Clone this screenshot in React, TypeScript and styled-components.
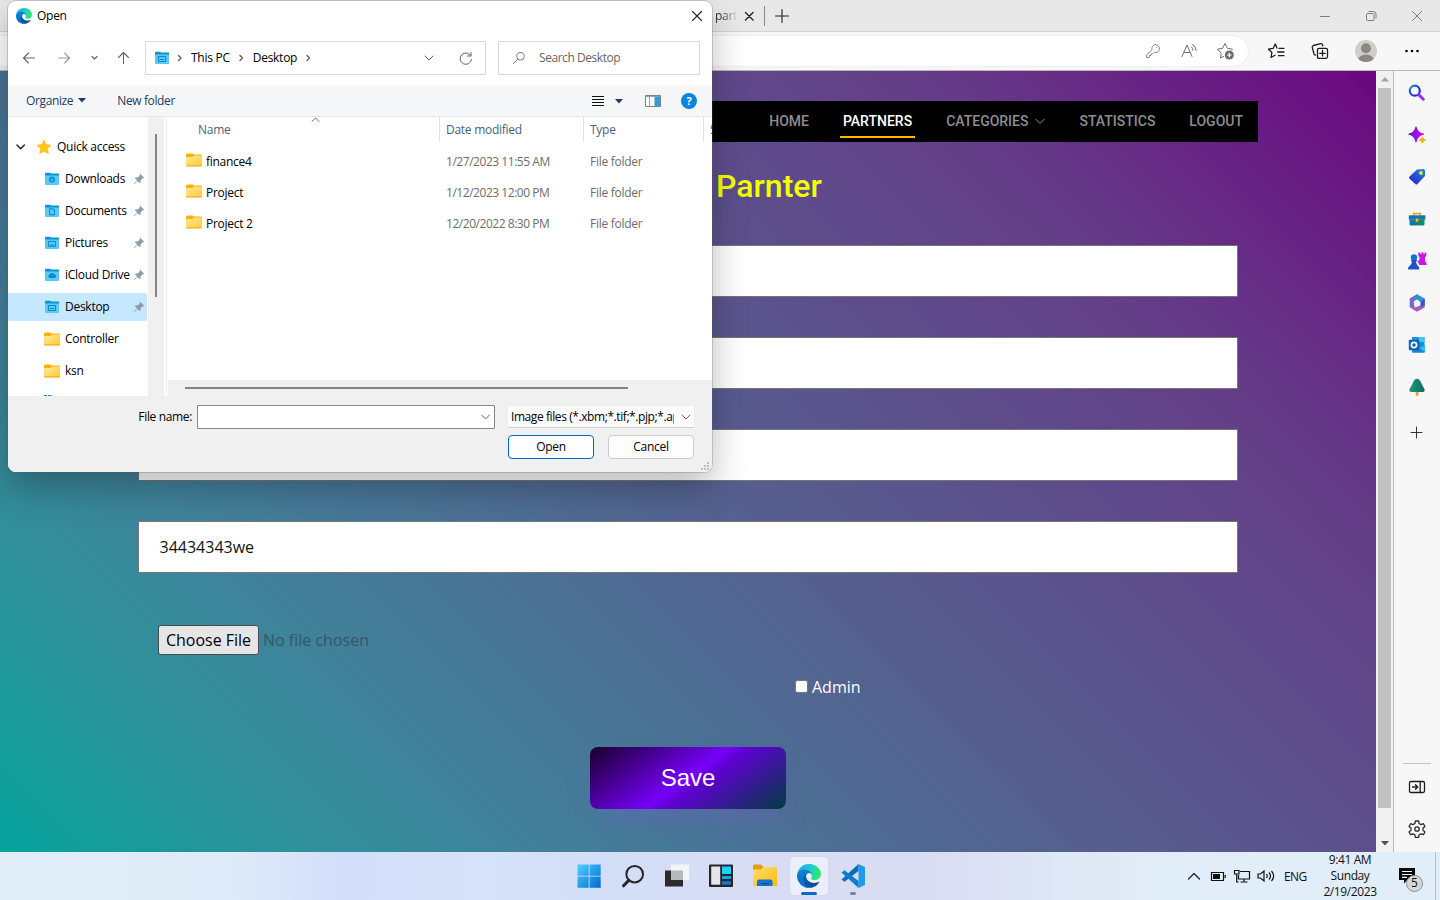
import React from "react";
import styled, { createGlobalStyle, css } from "styled-components";

const Global = createGlobalStyle`
  * { box-sizing: border-box; }
  body { margin: 0; overflow: hidden; font-family: "Open Sans", "Noto Sans", sans-serif; }
`;

const Screen = styled.div`
  position: relative;
  width: 1440px;
  height: 900px;
  overflow: hidden;
  display: flex;
  flex-direction: column;
  background: #f7f7f7;
`;

/* ---------- browser chrome ---------- */
const TabStrip = styled.div`
  height: 32px;
  flex: none;
  display: flex;
  align-items: center;
  background: #e8e8e8;
  border-bottom: 1px solid #d5d5d5;
  padding-left: 715px;
  svg { flex: none; }
`;
const TabTitle = styled.span`
  width: 21px;
  overflow: hidden;
  white-space: nowrap;
  font-size: 12px;
  line-height: 18px;
  letter-spacing: -0.25px;
  background: linear-gradient(90deg, #333 35%, #d0d0d0 100%);
  background-clip: text;
  color: transparent;
`;
const TabClose = styled.div`
  width: 26px;
  display: flex;
  justify-content: center;
`;
const TabDivider = styled.div`
  width: 1px;
  height: 20px;
  background: #8a8a8a;
  margin: 0 9px 0 2px;
`;
const WindowControls = styled.div`
  margin-left: auto;
  display: flex;
  svg { margin-right: 30px; }
  svg:last-child { margin-right: 15px; }
`;
const Toolbar = styled.div`
  height: 39px;
  flex: none;
  display: flex;
  align-items: center;
  background: #f7f7f7;
  border-bottom: 1px solid #b9b9b9;
  width: 1440px;
`;
const AddressPill = styled.div`
  width: 1248px;
  height: 30px;
  background: #fff;
  border-radius: 0 15px 15px 0;
  box-shadow: 0 0 2px #ddd;
  display: flex;
  align-items: center;
  justify-content: flex-end;
  gap: 18px;
  padding-right: 14px;
`;
const ToolbarActions = styled.div`
  display: flex;
  align-items: center;
  padding-left: 19px;
  svg + svg { margin-left: 26px; }
  svg:last-child { margin-left: 27px; }
`;
const Middle = styled.div`
  height: 781px;
  flex: none;
  display: flex;
`;

/* ---------- web page ---------- */
const Page = styled.main`
  width: 1376px;
  height: 781px;
  overflow: hidden;
  background: linear-gradient(45deg, #04a39b 0%, #2a949a 12%, #41819a 25%, #55608f 50%, #643e88 78%, #6b0780 100%);
`;
const Nav = styled.nav`
  height: 41px;
  margin: 30px 118px 0;
  padding-right: 15px;
  background: #000;
  display: flex;
  justify-content: flex-end;
  gap: 28px;
`;
const NavItem = styled.a<{ $active?: boolean }>`
  height: 37px;
  display: flex;
  align-items: center;
  gap: 7px;
  padding: 5px 3px 0;
  border-bottom: 2px solid ${(p) => (p.$active ? "#ffb703" : "transparent")};
  color: ${(p) => (p.$active ? "#fff" : "#8e8e8e")};
  font: 500 14px Roboto, sans-serif;
  &:last-child { padding-right: 0; }
`;
const Title = styled.h1`
  margin: 25px 0 0 716px;
  font: 500 32px/38px Roboto, sans-serif;
  color: #f4ff00;
`;
const Form = styled.div`
  width: 1100px;
  margin: 40px 0 0 138px;
  display: flex;
  flex-direction: column;
  gap: 40px;
`;
const Field = styled.div`
  height: 52px;
  flex: none;
  border: 1px solid #767676;
  background: #fff;
  padding: 0 20.5px;
  display: flex;
  align-items: center;
  font-size: 16px;
  color: #111;
`;
const FileRow = styled.div`
  display: flex;
  align-items: center;
  margin: 12px 20px 0;
  gap: 4px;
  color: #36556a;
  font-size: 16px;
  height: 30px;
`;
const ChooseFile = styled.div`
  width: 101px;
  height: 30px;
  border: 1px solid #4b4b4b;
  border-radius: 3px;
  background: #e6e6e6;
  color: #000;
  text-align: center;
  line-height: 28px;
`;
const AdminRow = styled.label`
  display: flex;
  align-items: center;
  gap: 4px;
  height: 24px;
  margin: -20px 0 0 657px;
  font-size: 16px;
  color: #fff;
`;
const CheckBox = styled.span`
  width: 13px;
  height: 13px;
  margin-bottom: 1px;
  border: 1px solid #767676;
  border-radius: 2.5px;
  background: #fff;
`;
const SaveButton = styled.div`
  width: 196px;
  height: 62px;
  margin: 8px auto 0;
  border-radius: 8px;
  background: linear-gradient(144deg, #17002a 0%, #7700fb 50%, #6100d4 56%, #003c40 100%);
  box-shadow: rgba(151, 65, 252, 0.2) 0 15px 30px -5px;
  color: #fff;
  font: 24px/62px "Liberation Sans", sans-serif;
  text-align: center;
`;

const PageScroll = styled.div`
  width: 18px;
  display: flex;
  flex-direction: column;
  align-items: center;
  background: #f1f1f1;
  border-right: 1px solid #b9b9b9;
`;
const PageThumb = styled.div`
  width: 13px;
  height: 720px;
  background: #c1c1c1;
`;
const ScrollArrow = styled.div`
  height: 17px;
  display: flex;
  align-items: center;
  & + ${PageThumb} + & { margin-top: auto; }
`;
const EdgeBar = styled.aside`
  width: 46px;
  display: flex;
  flex-direction: column;
  align-items: center;
  padding-top: 10px;
  gap: 18px;
  background: #f7f7f7;
  svg { flex: none; }
`;
const EdgeBarRule = styled.div`
  width: 28px;
  height: 1px;
  background: #c4c4c4;
  margin: auto 0 -7px;
`;
const EdgeBarFooter = styled.div`
  display: flex;
  flex-direction: column;
  gap: 18px;
  padding-bottom: 11px;
`;

/* ---------- taskbar ---------- */
const Taskbar = styled.footer`
  height: 48px;
  display: flex;
  align-items: center;
  padding-left: 567px;
  background: linear-gradient(90deg, #e1eef8 0, #deebf8 230px, #d3defa 340px, #d6e2f9 480px, #d2dff8 590px, #d9dcf4 760px, #d9ddf3 930px, #dfe9f6 1080px, #e1eef9 1200px);
`;
const TaskSlot = styled.div<{ $active?: boolean; $dot?: string }>`
  position: relative;
  width: 38px;
  height: 38px;
  margin: 0 3px;
  display: flex;
  align-items: center;
  justify-content: center;
  border-radius: 4px;
  ${(p) => p.$active && css`background: #ebeffa; box-shadow: 0 0 1px #b8bfd0;`}
  &::after {
    content: "";
    position: absolute;
    bottom: 0;
    width: ${(p) => (p.$active ? 16 : 6)}px;
    height: 3px;
    border-radius: 2px;
    background: ${(p) => p.$dot || "transparent"};
  }
`;
const Tray = styled.div`
  margin-left: auto;
  display: flex;
  align-items: center;
  gap: 6px;
  font-size: 12px;
  color: #111;
  height: 48px;
`;
const Lang = styled.span`
  margin-left: 3px;
  letter-spacing: -0.55px;
  width: 26px;
`;
const Clock = styled.div`
  width: 60px;
  margin-left: 4px;
  text-align: center;
  line-height: 16px;
  letter-spacing: -0.4px;
`;
const Notices = styled.div`
  position: relative;
  width: 17px;
  height: 16px;
  margin: 0 13px 0 13px;
`;
const Badge = styled.span`
  position: absolute;
  left: 7px;
  top: 7px;
  width: 17px;
  height: 17px;
  border: 1px solid #8b8f93;
  border-radius: 50%;
  background: #d5d8db;
  font-size: 12px;
  line-height: 14px;
  text-align: center;
`;
const ShowDesktop = styled.div`
  width: 5px;
  height: 48px;
  border-left: 1px solid #b3bec8;
`;

/* ---------- file dialog ---------- */
const Dialog = styled.section`
  position: absolute;
  left: 8px;
  top: 1px;
  width: 704px;
  height: 471px;
  border-radius: 8px;
  background: #fff;
  box-shadow: 0 0 0 1px rgba(90, 90, 90, 0.25), 0 16px 36px rgba(0, 0, 0, 0.27);
  font-size: 12px;
  letter-spacing: -0.27px;
  color: #000;
  white-space: nowrap;
`;
const DialogBody = styled.div`
  width: 704px;
  height: 471px;
  overflow: hidden;
  border-radius: 8px;
  display: flex;
  flex-direction: column;
`;
const DialogTitle = styled.header`
  height: 29px;
  flex: none;
  display: flex;
  align-items: center;
  padding: 0 7px 0 8px;
  gap: 5px;
  svg:last-child { margin-left: auto; }
`;
const Locator = styled.div`
  height: 56px;
  flex: none;
  display: flex;
  align-items: center;
  padding-left: 13px;
`;
const NavGlyphs = styled.div`
  width: 124px;
  display: flex;
  align-items: center;
`;
const PathBox = styled.div`
  width: 341px;
  height: 34px;
  border: 1px solid #d9d9d9;
  display: flex;
  align-items: center;
  padding: 0 12px 0 8px;
  svg { flex: none; }
`;
const Crumb = styled.span`
  margin: -1px 8px 0 8px;
`;
const PathEnd = styled.div`
  margin-left: auto;
  display: flex;
  align-items: center;
  gap: 24px;
`;
const SearchBox = styled.div`
  width: 202px;
  height: 34px;
  margin-left: 12px;
  border: 1px solid #d9d9d9;
  display: flex;
  align-items: center;
  gap: 13px;
  padding: 0 0 1px 13px;
  letter-spacing: -0.45px;
  color: #666;
`;
const CommandBar = styled.div`
  height: 31px;
  flex: none;
  display: flex;
  align-items: center;
  background: #f5f6f7;
  border-bottom: 1px solid #e4e6e9;
  padding: 0 15px 0 18px;
  color: #1f3b62;
`;
const Command = styled.span`
  display: flex;
  align-items: center;
  gap: 5px;
  margin: -1px 31px 0 0;
  letter-spacing: -0.37px;
`;
const CommandIcons = styled.div`
  margin-left: auto;
  display: flex;
  align-items: center;
`;
const SortCaret = styled.svg`
  margin: 0 22px 0 11px;
`;
const Help = styled.span`
  width: 16px;
  height: 16px;
  margin-left: 20px;
  border-radius: 50%;
  background: #0a84dc;
  color: #fff;
  font-weight: 700;
  font-size: 11px;
  line-height: 16px;
  text-align: center;
`;
const Panes = styled.div`
  height: 279px;
  flex: none;
  display: flex;
`;
const Tree = styled.div`
  width: 140px;
  height: 279px;
  overflow: hidden;
  padding-top: 16px;
`;
const TreeRow = styled.div<{ $root?: boolean; $selected?: boolean }>`
  width: 139px;
  height: 28px;
  margin-bottom: 4px;
  border-radius: 2px;
  display: flex;
  align-items: center;
  gap: 5px;
  padding: 0 2px 0 ${(p) => (p.$root ? 8 : 36)}px;
  background: ${(p) => (p.$selected ? "#c5e7ff" : "transparent")};
  svg { flex: none; }
`;
const TreeLabel = styled.span`
  width: 63px;
  flex: none;
  margin-top: -2px;
`;
const TreeScroll = styled.div`
  width: 16px;
  background: #f0f0f0;
  padding: 17px 0 0 7px;
`;
const TreeThumb = styled.div`
  width: 2px;
  height: 163px;
  background: #858585;
`;
const Splitter = styled.div`
  width: 4px;
  border-left: 2px solid #fff;
  background: linear-gradient(90deg, #f0f0f0 1px, #fff 1px);
`;
const FileList = styled.div`
  width: 544px;
  display: flex;
  flex-direction: column;
`;
const ColumnHeads = styled.div`
  position: relative;
  height: 29px;
  display: flex;
  color: #4a5f80;
  overflow: hidden;
  > svg { position: absolute; left: 143px; top: 0; }
`;
const ColumnHead = styled.div<{ $w: number; $pad: number }>`
  width: ${(p) => p.$w}px;
  flex: none;
  height: 25px;
  line-height: 26px;
  padding-left: ${(p) => p.$pad}px;
  border-right: 1px solid #e2e2e2;
`;
const FileRowItem = styled.div`
  height: 31px;
  display: flex;
  align-items: center;
  padding-left: 18px;
  color: #6d6d6d;
  svg { margin-bottom: 3px; }
`;
const FileName = styled.span`
  width: 260px;
  display: flex;
  align-items: center;
  gap: 4px;
  color: #000;
`;
const FileDate = styled.span`
  width: 144px;
  letter-spacing: -0.46px;
`;
const HScroll = styled.div`
  height: 16px;
  margin-top: auto;
  background: #f0f0f0;
  padding: 7px 0 0 17px;
`;
const HThumb = styled.div`
  width: 443px;
  height: 2px;
  background: #858585;
`;
const DialogFooter = styled.div`
  flex: 1;
  background: #f0f0f0;
  padding: 9px 18px 0 0;
  display: flex;
  flex-direction: column;
  gap: 6px;
`;
const FooterRow = styled.div<{ $gap: number }>`
  display: flex;
  justify-content: flex-end;
  align-items: center;
  gap: ${(p) => p.$gap}px;
  height: 24px;
`;
const NameLabel = styled.span`
  letter-spacing: -0.35px;
  margin-top: -1px;
`;
const NameInput = styled.div`
  width: 298px;
  height: 24px;
  margin-right: 8px;
  border: 1px solid #858585;
  border-radius: 1px;
  background: #fff;
  display: flex;
  align-items: center;
  justify-content: flex-end;
  padding-right: 4px;
`;
const TypeSelect = styled.div`
  width: 186px;
  height: 22px;
  background: #fbfbfb;
  border-bottom: 1px solid #cfcfcf;
  display: flex;
  align-items: center;
  padding: 0 3px;
  svg { margin-left: auto; flex: none; }
`;
const TypeText = styled.span`
  width: 163px;
  overflow: hidden;
  letter-spacing: -0.42px;
`;
const DialogButton = styled.div<{ $primary?: boolean }>`
  width: 86px;
  height: 24px;
  border: 1px solid ${(p) => (p.$primary ? "#0067c0" : "#cbcbcb")};
  border-radius: 4px;
  background: #fdfdfd;
  line-height: 21px;
  text-align: center;
`;
const Grip = styled.svg`
  position: absolute;
  right: 3px;
  bottom: 2px;
`;

/* ---------- icons ---------- */
const EdgeLogo = ({ size, id }: { size: number; id: string }) => (
  <svg width={size} height={size} viewBox="0 0 256 256">
    <defs>
      <linearGradient id={`${id}a`} x1="0.1" y1="0.6" x2="1" y2="0.6"><stop offset="0" stopColor="#0c59a4" /><stop offset="1" stopColor="#114a8b" /></linearGradient>
      <linearGradient id={`${id}b`} x1="0.8" y1="0.2" x2="0.2" y2="0.9"><stop offset="0" stopColor="#1278c8" /><stop offset="0.4" stopColor="#1080d4" /><stop offset="1" stopColor="#0067d8" /></linearGradient>
      <linearGradient id={`${id}c`} x1="0" y1="0.3" x2="1" y2="0.5"><stop offset="0" stopColor="#1ba6ea" /><stop offset="0.45" stopColor="#1cc4dc" /><stop offset="0.75" stopColor="#22e09c" /><stop offset="1" stopColor="#30ee60" /></linearGradient>
    </defs>
    <g transform="translate(-4.63 -4.92)">
      <path fill={`url(#${id}a)`} d="M235.68 195.46a93.73 93.73 0 0 1-10.54 4.71 101.87 101.87 0 0 1-35.9 6.46c-47.32 0-88.54-32.55-88.54-74.32A31.48 31.48 0 0 1 117.13 105c-42.8 1.8-53.8 46.4-53.8 72.53 0 73.88 68.09 81.37 82.76 81.37 7.91 0 19.84-2.3 27-4.56l1.31-.44a128.34 128.34 0 0 0 66.6-52.8 4 4 0 0 0-5.32-5.64Z" />
      <path fill={`url(#${id}b)`} d="M110.34 246.34A79.2 79.2 0 0 1 87.6 225a80.72 80.72 0 0 1 29.53-120c3.12-1.47 8.45-4.13 15.54-4a32.35 32.35 0 0 1 25.69 13 31.88 31.88 0 0 1 6.36 18.66c0-.21 24.46-79.6-80-79.6-43.9 0-80 41.66-80 78.21a130.15 130.15 0 0 0 12.11 56 128 128 0 0 0 156.38 67.11 75.55 75.55 0 0 1-62.78-8Z" />
      <path fill={`url(#${id}c)`} d="M156.94 153.78c-.81 1.05-3.3 2.5-3.3 5.66 0 2.61 1.7 5.12 4.72 7.23 14.38 10 41.49 8.68 41.56 8.68a59.56 59.56 0 0 0 30.27-8.35 61.38 61.38 0 0 0 30.43-52.88c.26-22.41-8-37.31-11.34-43.91C228.09 28.76 182.35 4.92 132.61 4.92a128 128 0 0 0-128 126.2c.48-36.54 36.8-66.05 80-66.05 3.5 0 23.46.34 42 10.07 16.34 8.58 24.9 18.94 30.85 29.21 6.18 10.67 7.28 24.15 7.28 29.52 0 5.37-2.74 13.33-7.8 19.91Z" />
    </g>
  </svg>
);

type StrokeProps = { w: number; h: number; d: string; c?: string; sw?: number };
const Stroke = ({ w, h, d, c = "#222", sw = 1 }: StrokeProps) => (
  <svg width={w} height={h} viewBox={`0 0 ${w} ${h}`} fill="none" stroke={c} strokeWidth={sw} strokeLinecap="round" strokeLinejoin="round">
    <path d={d} />
  </svg>
);

const YellowFolder = () => (
  <svg width="16" height="14" viewBox="0 0 16 14">
    <defs><linearGradient id="yf" x1="0" y1="0" x2="1" y2="1"><stop offset="0" stopColor="#ffe9a0" /><stop offset="1" stopColor="#ffcb2e" /></linearGradient></defs>
    <path d="M0 2a1.500 1.500 0 0 1 1.500-1.500H6.500L8 1.500h7a1 1 0 0 1 1 1V12H0z" fill="#fdb005" />
    <path d="M0 4h6.500L8 2.500H16V12a1 1 0 0 1-1 1H1a1 1 0 0 1-1-1z" fill="url(#yf)" />
    <path d="M.3 13h15.400" stroke="#eba400" />
  </svg>
);

const glyphs: Record<string, React.ReactNode> = {
  down: <g><circle cx="7" cy="7.500" r="3" fill="#0a8fd0" /><path d="M7 6v3M5.700 7.800L7 9l1.300-1.200" stroke="#5fcdf5" fill="none" /></g>,
  doc: <path d="M4.700 4.800h3l1.800 1.800v4h-4.800z" fill="none" stroke="#0a8fd0" strokeWidth="1.100" />,
  pic: <g><rect x="3.500" y="5.500" width="7" height="4.800" fill="none" stroke="#0a8fd0" strokeWidth="1.100" /><path d="M4.500 9.600l1.800-1.800 1.200 1 1-.6 1.300 1.400z" fill="#0a8fd0" /></g>,
  cloud: <path d="M4.500 10a1.800 1.800 0 0 1 0-3.400 2.700 2.700 0 0 1 4.800-.3A1.900 1.900 0 0 1 10 10z" fill="#0a8fd0" />,
  desk: <path d="M3.500 5.500h7v5h-7zM5 8.500h4" fill="none" stroke="#0a8fd0" strokeWidth="1.100" />,
};
const BlueFolder = ({ kind }: { kind: string }) => (
  <svg width="16" height="14" viewBox="-1 0 16 14">
    <path d="M0 1.500A.8.8 0 0 1 .8.700H5L6.300 1.500H14v3H0z" fill="#0a94d2" />
    <path d="M0 3.500h14v8.700a.8.8 0 0 1-.8.800H.8a.8.8 0 0 1-.8-.8z" fill="#5cc9f5" />
    {glyphs[kind]}
  </svg>
);
const Pin = () => (
  <svg width="12" height="12" viewBox="0 0 12 12">
    <path d="M7.200.8l4 4-.9.600-.8-.1-1.900 2 .1 1.900-1 .9-2.200-2.200L1.200 11.200.8 10.800l3.300-3.300L1.900 5.300l.9-1 1.900.1 2-1.900-.1-.8z" fill="#8e9aa5" />
  </svg>
);
const StarYellow = () => (
  <svg width="16" height="16" viewBox="0 0 16 16"><path d="M8 1l2.100 4.600 4.900.6-3.600 3.400 1 5L8 12.200l-4.400 2.400 1-5L1 6.200l4.900-.6z" fill="#ffc61a" stroke="#f7b500" strokeWidth=".6" strokeLinejoin="round" /></svg>
);

const Minimize = () => <Stroke w={16} h={16} d="M3.500 8.500h9" c="#7d7d7d" />;
const Restore = () => <Stroke w={16} h={16} d="M5 5.500h5q1 0 1 1v5q0 1-1 1H5q-1.500 0-1.500-1V6.500q0-1 1.500-1zM6 3.500h4.500q2.500 0 2.500 2.500v4" c="#7d7d7d" />;
const CloseThin = ({ c, sw = 1 }: { c: string; sw?: number }) => <Stroke w={16} h={16} d="M3.500 3.500l9 9M12.500 3.500l-9 9" c={c} sw={sw} />;

const KeyIcon = () => <Stroke w={18} h={18} c="#858585" d="M11.500 2.500a4 4 0 1 1-1.300 7.800L8.700 11.800H7v1.700H5.300l-.2 2H2.500V13L8 7.800A4 4 0 0 1 11.500 2.500zM12.700 5.300v.1" />;
const ReadAloud = () => <Stroke w={18} h={18} c="#707070" d="M2 14.500L7 3l5 11.500M3.900 10.500h6.200M11.500 5q1.500 1 1.500 3.300M12.500 2.500q3.500 1.700 3.700 6" />;
const StarAdd = () => (
  <svg width="18" height="18" viewBox="0 0 18 18" fill="none">
    <path d="M8 14.300L4.500 16l.7-5L1.500 7.200l5-.9L9 1.500l2.300 4.800 5.200.9-1 1" stroke="#707070" strokeLinejoin="round" />
    <circle cx="13.300" cy="13" r="4.500" fill="#6b6b6b" /><path d="M13.300 10.700v4.600M11 13h4.600" stroke="#fff" strokeWidth="1.200" />
  </svg>
);
const Favorites = () => <Stroke w={18} h={18} sw={1.3} c="#1c1c1c" d="M10 6L8.300 2 6.200 6.300 1.500 7.200l3.400 3.300L4 15.500l4-2.200M12 6.300h5M10.500 10h6.500M11.500 13.700h5.500" />;
const Collections = () => <Stroke w={18} h={18} sw={1.3} c="#1c1c1c" d="M8 6.300h7q1.500 0 1.500 1.500v7q0 1.500-1.500 1.500H8q-1.500 0-1.500-1.500v-7q0-1.500 1.500-1.500zM11.500 8.500v5.600M8.700 11.300h5.600M4.500 13.200Q3.300 13 3 12L1.300 5.500Q1 4 2.400 3.500L9.700 1.600q1.500-.3 1.900 1.200l.2 1" />;
const Avatar = () => (
  <svg width="22" height="22" viewBox="0 0 22 22">
    <defs><clipPath id="av"><circle cx="11" cy="11" r="11" /></clipPath></defs>
    <g clipPath="url(#av)"><path d="M0 0h22v22H0z" fill="#d0cec9" /><circle cx="11" cy="8.200" r="5" fill="#8b8782" /><ellipse cx="11" cy="20.500" rx="8" ry="6" fill="#8b8782" /></g>
  </svg>
);
const Dots = () => <svg width="16" height="16" viewBox="0 0 16 16"><circle cx="2.500" cy="8" r="1.300" /><circle cx="8" cy="8" r="1.300" /><circle cx="13.500" cy="8" r="1.300" /></svg>;

const SideIcons = () => (
  <>
    <svg width="24" height="24" viewBox="0 0 24 24">
      <defs><linearGradient id="s1" x1="0" y1="0" x2="1" y2="1"><stop offset="0" stopColor="#1090e8" /><stop offset=".5" stopColor="#1c3cd0" /><stop offset="1" stopColor="#3c20d8" /></linearGradient></defs>
      <circle cx="9.800" cy="9.700" r="5" fill="none" stroke="url(#s1)" strokeWidth="2.200" /><path d="M14 14l4.300 4.200" stroke="#a028ee" strokeWidth="3" strokeLinecap="round" />
    </svg>
    <svg width="24" height="24" viewBox="0 0 24 24">
      <defs><linearGradient id="s2"><stop offset="0" stopColor="#4a1ce0" /><stop offset="1" stopColor="#f000f0" /></linearGradient></defs>
      <path d="M11 4.200q1.200 6 7.500 7-6.300 1.200-7.500 7.300-1.200-6.100-7-7.300 5.800-1 7-7z" fill="url(#s2)" stroke="url(#s2)" strokeWidth="1.300" strokeLinejoin="round" />
      <path d="M17.400 14q.5 2.600 3 3-2.500.5-3 3.100-.5-2.600-3-3.100 2.500-.4 3-3z" fill="#f9b000" stroke="#f9b000" strokeWidth="1" />
    </svg>
    <svg width="24" height="24" viewBox="0 0 24 24">
      <defs><linearGradient id="s3" x1="0" y1="1" x2="1" y2="0"><stop offset="0" stopColor="#3a18c8" /><stop offset="1" stopColor="#0e90dc" /></linearGradient></defs>
      <path d="M12 4.500l6.500-.6q1.500 0 1.500 1.500V11l-7.500 8q-1 1-2.200 0l-5.800-5.200q-1-1 0-2.200z" fill="url(#s3)" /><circle cx="16" cy="8" r="1.900" fill="#ffe020" />
    </svg>
    <svg width="24" height="24" viewBox="0 0 24 24">
      <defs><linearGradient id="s4"><stop offset="0" stopColor="#1270c8" /><stop offset="1" stopColor="#12944c" /></linearGradient></defs>
      <path d="M8.700 9V6.500h6.600V9" fill="none" stroke="#e8a510" strokeWidth="1.600" /><path d="M4.500 12.500h15V17q0 1.500-1.500 1.500H6q-1.500 0-1.500-1.500z" fill="url(#s4)" /><path d="M3.800 8.300h16.600v4.400H3.800z" fill="#1675ae" /><path d="M10.800 11.500h2.600v2.200a1.300 1.300 0 0 1-2.600 0z" fill="#f5b818" />
    </svg>
    <svg width="24" height="24" viewBox="0 0 24 24">
      <path d="M13.300 3.500h1.900v1.400h1.200V3.300h2v1.600h1.200V3.500h1.700v3.200L20 8.200v4l1.500 1.500V16h-7l-2-3.500 2-2V8.200l-1.200-1.500z" fill="#c41be8" />
      <circle cx="9" cy="8.500" r="3.200" fill="#1470d0" /><path d="M6 11h6v1.200h-1q0 3.500 2.500 5.200.8.500.8 3.200H3q0-2.700.8-3.200Q6.800 15.700 6.900 12.200H6z" fill="#2350c8" />
    </svg>
    <svg width="24" height="24" viewBox="0 0 24 24">
      <path d="M12 3.200L4.700 7.400v8.800L8.600 18l1-2.500-1-5L15 6.700z" fill="#7668cc" /><path d="M12 3.200l7.700 4.300v5.800l-4-1L12 8.300 8.600 10z" fill="#2295dc" /><path d="M19.700 9.500v7L12 20.800l-5.500-3.200 8.900-3.200.3-4.300z" fill="#a45ec4" /><path d="M19.700 7.600v6.900l-4 1.500v-5z" fill="#3857b8" /><path d="M12 8.700l3.200 1.700v3.500L12 15.500l-3-1.600v-3.500z" fill="#f3f3fa" />
    </svg>
    <svg width="24" height="24" viewBox="0 0 24 24">
      <path d="M7 4h12.500v9H7z" fill="#1892dd" /><path d="M13.700 4h5.800v5h-5.800z" fill="#45c3f4" /><path d="M7 12l13 .2v6.300q0 1.200-1.200 1.200H8.200Q7 19.700 7 18.500z" fill="#1686d4" /><path d="M20.200 11.800v7.500L14 15z" fill="#38b8ee" /><rect x="3.800" y="6.700" width="10.500" height="10.500" rx="1" fill="#0e62bd" /><circle cx="9" cy="12" r="2.600" fill="none" stroke="#fff" strokeWidth="1.700" />
    </svg>
    <svg width="24" height="24" viewBox="0 0 24 24">
      <defs><linearGradient id="s8"><stop offset="0" stopColor="#1b9c78" /><stop offset="1" stopColor="#0b6b64" /></linearGradient></defs>
      <path d="M10.700 16h2.800v3.500a1.400 1.400 0 0 1-2.800 0z" fill="#eda317" /><path d="M12 3.800q2 0 3.300 2.200l1.500 3.300 2.700 5q.8 2.300-1.700 2.700H6.200q-2.500-.4-1.700-2.700l2.700-5L8.700 6Q10 3.800 12 3.800z" fill="url(#s8)" />
    </svg>
  </>
);

const App = () => (
  <Screen>
    <Global />
    <TabStrip>
      <TabTitle>part</TabTitle>
      <TabClose><Stroke w={16} h={16} d="M4.500 4.500l7.500 7.500M12 4.500L4.500 12" sw={1.4} /></TabClose>
      <TabDivider />
      <Stroke w={16} h={16} d="M1.500 8h13M8 1.500v13" sw={1.1} />
      <WindowControls><Minimize /><Restore /><CloseThin c="#7d7d7d" /></WindowControls>
    </TabStrip>
    <Toolbar>
      <AddressPill><KeyIcon /><ReadAloud /><StarAdd /></AddressPill>
      <ToolbarActions><Favorites /><Collections /><Avatar /><Dots /></ToolbarActions>
    </Toolbar>
    <Middle>
      <Page>
        <Nav>
          <NavItem>HOME</NavItem>
          <NavItem $active>PARTNERS</NavItem>
          <NavItem>CATEGORIES<Stroke w={10} h={7} d="M.5 1l4.500 4.500L9.500 1" c="#8e8e8e" /></NavItem>
          <NavItem>STATISTICS</NavItem>
          <NavItem>LOGOUT</NavItem>
        </Nav>
        <Title>Parnter</Title>
        <Form>
          <Field /><Field /><Field /><Field>34434343we</Field>
          <FileRow><ChooseFile>Choose File</ChooseFile>No file chosen</FileRow>
          <AdminRow><CheckBox />Admin</AdminRow>
          <SaveButton>Save</SaveButton>
        </Form>
      </Page>
      <PageScroll>
        <ScrollArrow><svg width="8" height="5"><path d="M0 4.500L4 0l4 4.500z" fill="#a3a3a3" /></svg></ScrollArrow>
        <PageThumb />
        <ScrollArrow><svg width="8" height="5"><path d="M0 0h8L4 4.500z" fill="#505050" /></svg></ScrollArrow>
      </PageScroll>
      <EdgeBar>
        <SideIcons />
        <Stroke w={24} h={28} d="M6 15.500h11M11.500 10v11" c="#333" />
        <EdgeBarRule />
        <EdgeBarFooter>
          <Stroke w={24} h={24} sw={1.3} c="#1c1c1c" d="M6 6.500h12q1.500 0 1.500 1.500v8q0 1.500-1.500 1.500H6q-1.500 0-1.500-1.500V8q0-1.500 1.500-1.500zM15.200 6.500v11M7.500 12h5M10.500 9.800l2.200 2.200-2.200 2.200" />
          <Stroke w={24} h={24} sw={1.3} c="#2c2c2c" d="M10.400 4h3.200l.5 2.500 1.900 1.100 2.400-.9 1.600 2.800-2 1.600v2.200l2 1.600-1.600 2.800-2.400-.9-1.900 1.100-.5 2.500h-3.200l-.5-2.500L8 16.800l-2.400.9L4 14.900l2-1.600v-2.200L4 9.500l1.600-2.800 2.400.9 1.900-1.100zM12 9.800a2.200 2.200 0 1 1 0 4.400 2.200 2.200 0 0 1 0-4.400z" />
        </EdgeBarFooter>
      </EdgeBar>
    </Middle>

    <Taskbar>
      <TaskSlot>
        <svg width="24" height="24" viewBox="0 0 24 24"><defs><linearGradient id="win" gradientUnits="userSpaceOnUse" x1="0" y1="0" x2="24" y2="24"><stop offset="0" stopColor="#50d4ff" /><stop offset="1" stopColor="#0067cf" /></linearGradient></defs><path d="M.5.500h11.200v11.200H.5zM12.500.500h11.200v11.200H12.500zM.5 12.500h11.200v11.200H.5zM12.500 12.500h11.200v11.200H12.500z" fill="url(#win)" /></svg>
      </TaskSlot>
      <TaskSlot>
        <svg width="24" height="24" viewBox="0 0 24 24" fill="none" stroke="#26262c"><circle cx="13.700" cy="10.200" r="8.300" strokeWidth="2" /><path d="M7.800 16.400l-5.300 5.400" strokeWidth="3" strokeLinecap="round" /></svg>
      </TaskSlot>
      <TaskSlot>
        <svg width="24" height="24" viewBox="0 0 24 24"><path d="M0 6.500h18v16H0z" fill="#2b2b2b" /><path d="M6 .5h18v15.500H6z" fill="#f5f5f5" opacity=".95" /><path d="M6 6.500h12V16H6z" fill="#b9b9b9" /></svg>
      </TaskSlot>
      <TaskSlot>
        <svg width="24" height="24" viewBox="0 0 24 24"><rect y=".5" width="24" height="22.500" rx="1" fill="#26262a" /><path d="M2.200 2.500h9v18.200h-9z" fill="#e6e6ea" /><path d="M13 2.500h9v7.500h-9z" fill="#19d3fb" /><path d="M13 12h9v3h-9z" fill="#12a5e8" /><path d="M13 17.200h9v3.500h-9z" fill="#1079dc" /></svg>
      </TaskSlot>
      <TaskSlot>
        <svg width="24" height="24" viewBox="0 0 24 24"><defs><linearGradient id="ex" x1="0" y1="0" x2="1" y2="1"><stop offset="0" stopColor="#ffdf6b" /><stop offset="1" stopColor="#fdbb0b" /></linearGradient></defs><path d="M0 2q0-1.500 1.500-1.500H8L10.500 3v3H0z" fill="#e59f0b" /><path d="M0 5.500h8L10.500 3H23q1 0 1 1v18H0z" fill="url(#ex)" /><path d="M4 22v-4.500q0-2 2-2h11.500q2 0 2 2V22z" fill="#1473cc" /><path d="M8 19h7.500v1.400H8z" fill="#0b4e9c" /></svg>
      </TaskSlot>
      <TaskSlot $active $dot="#0a67cc"><EdgeLogo size={24} id="tb" /></TaskSlot>
      <TaskSlot $dot="#7b8292">
        <svg width="26" height="26" viewBox="0 0 26 26"><path d="M18.500 1L25 4v18l-6.500 3z" fill="#1f9be8" /><path d="M18.500 1v7L4.500 18.800 1.500 16.500z" fill="#0a6db8" /><path d="M18.500 25v-7L4.500 7.200 1.500 9.500z" fill="#0d7cca" /></svg>
      </TaskSlot>
      <Tray>
        <Stroke w={17} h={8} d="M1.500 7L7 1.500 12.500 7" sw={1.3} />
        <svg width="17" height="11" viewBox="0 0 17 11"><path d="M1.500 1.500h12v8h-12zM15.200 4v3" fill="none" stroke="#111" strokeWidth="1.200" /><path d="M3 3h7v5H3z" fill="#111" /></svg>
        <svg width="18" height="16" viewBox="0 0 18 16" fill="none" stroke="#111" strokeWidth="1.200"><path d="M7 3.500h9.500v7.500H5.500V7M11 11v3M7.500 14h7M1.500 2.500h4.500v3.500H1.500zM3.700 6v8h2" /></svg>
        <svg width="18" height="14" viewBox="0 0 18 14" fill="none" stroke="#111" strokeWidth="1.200"><path d="M1 5h2.500L7 2v10L3.500 9H1zM9.500 5q1.500 2 0 4M12 3.500q3 3.500 0 7M14.500 2q4.300 5 0 10" /></svg>
        <Lang>ENG</Lang>
        <Clock>9:41 AM<br />Sunday<br />2/19/2023</Clock>
        <Notices>
          <svg width="17" height="16" viewBox="0 0 17 16"><path d="M0 0h16v12H8.500L5 15.500V12H0z" fill="#0a0a0a" /><path d="M3 3.500h10M3 6.500h10M3 9.300h5" stroke="#fff" strokeWidth="1.200" /></svg>
          <Badge>5</Badge>
        </Notices>
        <ShowDesktop />
      </Tray>
    </Taskbar>

    <Dialog>
      <DialogBody>
        <DialogTitle><EdgeLogo size={16} id="dt" />Open<CloseThin c="#222" sw={1.1} /></DialogTitle>
        <Locator>
          <NavGlyphs>
            <Stroke w={35} h={16} d="M2.500 8h11M7.500 3l-5 5 5 5" c="#666" sw={1.1} />
            <Stroke w={33} h={16} d="M2.500 8h11M8.500 3l5 5-5 5" c="#9c9c9c" sw={1.1} />
            <Stroke w={27} h={16} d="M3 6.500l2.500 2.500L8 6.500" c="#666" sw={1.2} />
            <Stroke w={16} h={16} d="M7.500 13.500v-11M2.500 7.500l5-5 5 5" c="#666" sw={1.1} />
          </NavGlyphs>
          <PathBox>
            <BlueFolder kind="desk" />
            <Stroke w={13} h={10} d="M8.500 2.500L11 5 8.500 7.500" c="#5a5a5a" sw={1.3} />
            <Crumb>This PC</Crumb>
            <Stroke w={7} h={10} d="M2 2.500L4.500 5 2 7.500" c="#5a5a5a" sw={1.3} />
            <Crumb>Desktop</Crumb>
            <Stroke w={7} h={10} d="M2 2.500L4.500 5 2 7.500" c="#5a5a5a" sw={1.3} />
            <PathEnd>
              <Stroke w={10} h={6} d="M1 1l4 4 4-4" c="#666" />
              <Stroke w={15} h={15} d="M12.800 4.800A5.700 5.700 0 1 0 13.500 8.500M13 1.500v3.500H9.500" c="#666" />
            </PathEnd>
          </PathBox>
          <SearchBox><Stroke w={14} h={14} d="M8.500 1.500a3.800 3.800 0 1 1 0 7.600 3.800 3.800 0 0 1 0-7.600zM5.700 8.200L1.500 12.500" c="#777" />Search Desktop</SearchBox>
        </Locator>
        <CommandBar>
          <Command>Organize<svg width="8" height="5"><path d="M0 0h8L4 4.500z" fill="#1f3b62" /></svg></Command>
          <Command>New folder</Command>
          <CommandIcons>
            <svg width="12" height="11"><path d="M0 .5h12M0 3.500h12M0 6.500h12M0 9.500h12" stroke="#111" /></svg>
            <SortCaret width="8" height="5"><path d="M0 0h8L4 4.500z" fill="#1f3b62" /></SortCaret>
            <svg width="16" height="12"><path d="M.5.500h15v11H.5z" fill="#fff" stroke="#7a828a" /><path d="M1 1.500h14M4.500 2v9" stroke="#9aa1a8" /><path d="M9.500 2h5.500v9H9.500z" fill="#2f9de6" /></svg>
            <Help>?</Help>
          </CommandIcons>
        </CommandBar>
        <Panes>
          <Tree>
            <TreeRow $root><Stroke w={15} h={8} d="M1 2l3.700 3.700L8.400 2" sw={1.5} /><StarYellow /><TreeLabel>Quick access</TreeLabel></TreeRow>
            <TreeRow><BlueFolder kind="down" /><TreeLabel>Downloads</TreeLabel><Pin /></TreeRow>
            <TreeRow><BlueFolder kind="doc" /><TreeLabel>Documents</TreeLabel><Pin /></TreeRow>
            <TreeRow><BlueFolder kind="pic" /><TreeLabel>Pictures</TreeLabel><Pin /></TreeRow>
            <TreeRow><BlueFolder kind="cloud" /><TreeLabel>iCloud Drive</TreeLabel><Pin /></TreeRow>
            <TreeRow $selected><BlueFolder kind="desk" /><TreeLabel>Desktop</TreeLabel><Pin /></TreeRow>
            <TreeRow><YellowFolder /><TreeLabel>Controller</TreeLabel></TreeRow>
            <TreeRow><YellowFolder /><TreeLabel>ksn</TreeLabel></TreeRow>
            <TreeRow><svg width="16" height="16"><path d="M0 .5h3M4 .5h3.500" stroke="#0a94d2" /></svg></TreeRow>
          </Tree>
          <TreeScroll><TreeThumb /></TreeScroll>
          <Splitter />
          <FileList>
            <ColumnHeads>
              <Stroke w={9} h={6} d="M1 4.500l3.500-3.500L8 4.500" c="#666" />
              <ColumnHead $w={272} $pad={30}>Name</ColumnHead>
              <ColumnHead $w={144} $pad={6}>Date modified</ColumnHead>
              <ColumnHead $w={120} $pad={6}>Type</ColumnHead>
              <ColumnHead $w={100} $pad={6}>Size</ColumnHead>
            </ColumnHeads>
            {[["finance4", "1/27/2023 11:55 AM"], ["Project", "1/12/2023 12:00 PM"], ["Project 2", "12/20/2022 8:30 PM"]].map(([n, d]) => (
              <FileRowItem key={n}>
                <FileName><YellowFolder />{n}</FileName>
                <FileDate>{d}</FileDate>
                File folder
              </FileRowItem>
            ))}
            <HScroll><HThumb /></HScroll>
          </FileList>
        </Panes>
        <DialogFooter>
          <FooterRow $gap={5}><NameLabel>File name:</NameLabel><NameInput><Stroke w={9} h={6} d="M.5 1l4 4 4-4" c="#666" /></NameInput>
            <TypeSelect><TypeText>Image files (*.xbm;*.tif;*.pjp;*.apng)</TypeText><Stroke w={10} h={6} d="M1 1l4 4 4-4" c="#666" /></TypeSelect>
          </FooterRow>
          <FooterRow $gap={14}><DialogButton $primary>Open</DialogButton><DialogButton>Cancel</DialogButton></FooterRow>
        </DialogFooter>
      </DialogBody>
      <Grip width="8" height="8"><path d="M6 0h2v2H6zM3 3h2v2H3zM6 3h2v2H6zM0 6h2v2H0zM3 6h2v2H3zM6 6h2v2H6z" fill="#bdbdbd" /></Grip>
    </Dialog>
  </Screen>
);

export default App;
